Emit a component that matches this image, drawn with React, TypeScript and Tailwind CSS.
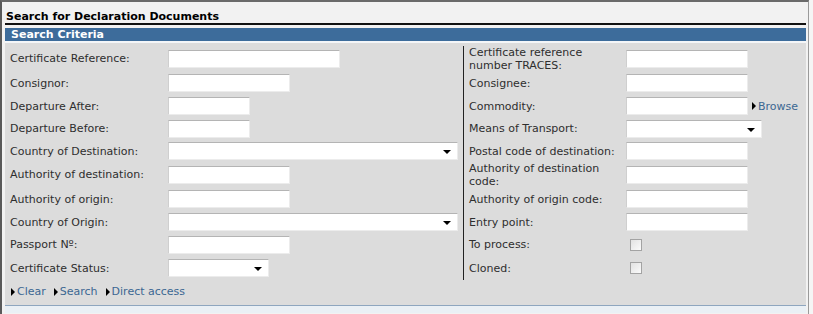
import React from "react";

type Field =
  | { kind: "text"; w: string }
  | { kind: "select"; w: string }
  | { kind: "check" }
  | { kind: "browse"; w: string };

interface Row {
  h: string;
  left: string;
  leftField: Field;
  right: string;
  rightField: Field;
}

const rows: Row[] = [
  { h: "h-[25px]", left: "Certificate Reference:", leftField: { kind: "text", w: "w-[172px]" }, right: "Certificate reference number TRACES:", rightField: { kind: "text", w: "w-[122px]" } },
  { h: "h-[24px]", left: "Consignor:", leftField: { kind: "text", w: "w-[122px]" }, right: "Consignee:", rightField: { kind: "text", w: "w-[122px]" } },
  { h: "h-[22px]", left: "Departure After:", leftField: { kind: "text", w: "w-[82px]" }, right: "Commodity:", rightField: { kind: "browse", w: "w-[122px]" } },
  { h: "h-[23px]", left: "Departure Before:", leftField: { kind: "text", w: "w-[82px]" }, right: "Means of Transport:", rightField: { kind: "select", w: "w-[136px]" } },
  { h: "h-[22px]", left: "Country of Destination:", leftField: { kind: "select", w: "w-[290px]" }, right: "Postal code of destination:", rightField: { kind: "text", w: "w-[122px]" } },
  { h: "h-[25px]", left: "Authority of destination:", leftField: { kind: "text", w: "w-[122px]" }, right: "Authority of destination code:", rightField: { kind: "text", w: "w-[122px]" } },
  { h: "h-[24px]", left: "Authority of origin:", leftField: { kind: "text", w: "w-[122px]" }, right: "Authority of origin code:", rightField: { kind: "text", w: "w-[122px]" } },
  { h: "h-[22px]", left: "Country of Origin:", leftField: { kind: "select", w: "w-[290px]" }, right: "Entry point:", rightField: { kind: "text", w: "w-[122px]" } },
  { h: "h-[23px]", left: "Passport Nº:", leftField: { kind: "text", w: "w-[122px]" }, right: "To process:", rightField: { kind: "check" } },
  { h: "h-[24px]", left: "Certificate Status:", leftField: { kind: "select", w: "w-[101px]" }, right: "Cloned:", rightField: { kind: "check" } },
];

const inputBox =
  "h-[18px] bg-white border border-t-[#b4b4b4] border-l-[#cfcfcf] border-r-[#ececec] border-b-[#ececec]";

function Arrow() {
  return <span className="inline-block w-0 h-0 border-l-[4px] border-r-[4px] border-t-[4px] border-l-transparent border-r-transparent border-t-black" />;
}

function FieldCell({ f }: { f: Field }) {
  if (f.kind === "check") {
    return <div className="ml-[4px] w-[12px] h-[12px] border border-[#a3a3a3] bg-gradient-to-br from-[#e2e2e2] to-[#fbfbfb]" />;
  }
  if (f.kind === "select") {
    return (
      <div className={`${inputBox} ${f.w} flex items-center justify-end pr-[6px] pt-[2px]`}>
        <Arrow />
      </div>
    );
  }
  if (f.kind === "browse") {
    return (
      <div className="flex items-center">
        <div className={`${inputBox} ${f.w}`} />
        <LinkItem text="Browse" className="ml-[4px]" />
      </div>
    );
  }
  return <div className={`${inputBox} ${f.w}`} />;
}

function LinkItem({ text, className = "" }: { text: string; className?: string }) {
  return (
    <span className={`inline-flex items-center text-[#3b6792] ${className}`}>
      <span className="inline-block w-0 h-0 border-t-[4px] border-b-[4px] border-l-[4px] border-t-transparent border-b-transparent border-l-black mr-[2px]" />
      {text}
    </span>
  );
}

export default function App() {
  return (
    <div className="min-h-[314px] bg-[#f5f5f5] text-[11px] leading-[13px] text-[#2e2e2e]" style={{ fontFamily: "Verdana, 'DejaVu Sans', sans-serif" }}>
      <div className="w-[809px] h-[314px] bg-[#f2f2f2] border-t-2 border-l-2 border-r border-t-[#6a6a6a] border-l-[#5a5a5a] border-r-[#9a9a9a] pl-[3px] pr-[2px]">
        {/* Page title */}
        <div className="h-[23px] pt-[8px] pl-[1px] font-bold text-black border-b-2 border-[#111]">
          Search for Declaration Documents
        </div>

        {/* Section header */}
        <div className="mt-[3px] h-[13px] bg-[#3d6c9b] pl-[6px] font-bold text-white leading-[13px]">
          Search Criteria
        </div>
        <div className="h-[2px] bg-[#f4f6f8]" />

        {/* Criteria panel */}
        <div className="bg-[#dcdcdc] h-[262px] pt-[3px] pl-[5px]">
          <div className="grid grid-cols-[158px_295px_163px_1fr]">
            {rows.map((r, i) => (
              <React.Fragment key={i}>
                <div className={`${r.h} flex items-center`}>{r.left}</div>
                <div className={`${r.h} flex items-center`}>
                  <FieldCell f={r.leftField} />
                </div>
                <div className={`${r.h} flex items-center border-l border-[#222] pl-[5px] pr-[8px]`}>{r.right}</div>
                <div className={`${r.h} flex items-center`}>
                  <FieldCell f={r.rightField} />
                </div>
              </React.Fragment>
            ))}
          </div>
          <div className="mt-[5px] flex items-center gap-[8px] pl-[1px]">
            <LinkItem text="Clear" />
            <LinkItem text="Search" />
            <LinkItem text="Direct access" />
          </div>
        </div>
        <div className="h-[1px] bg-[#8ea6bf]" />
        <div className="h-[7px] bg-[#eaf0f5]" />
      </div>
    </div>
  );
}
